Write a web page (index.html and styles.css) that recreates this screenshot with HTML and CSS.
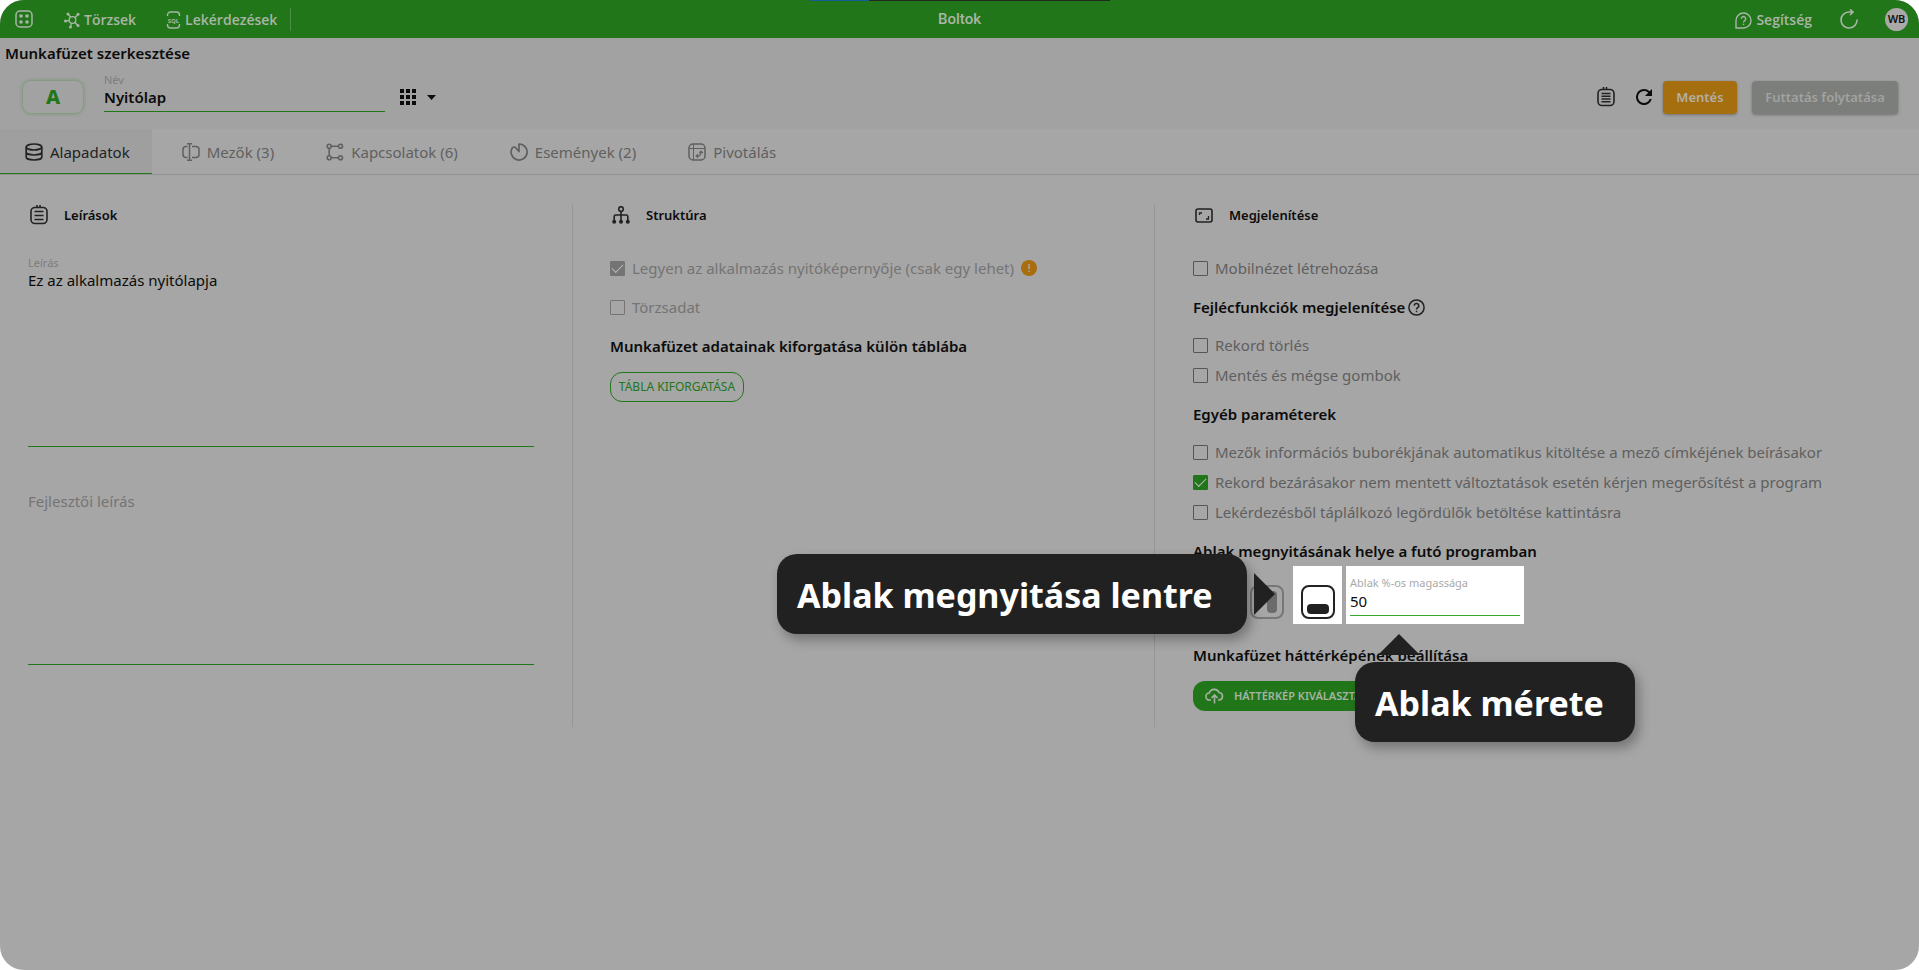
FILE: index.html
```html
<!DOCTYPE html>
<html lang="hu">
<head>
<meta charset="utf-8">
<title>Munkafüzet szerkesztése</title>
<link rel="stylesheet" href="styles.css">
</head>
<body>
<div class="app">
  <div class="progress"><span class="progress-done"></span><span class="progress-rest"></span></div>
  <header class="topbar">
    <nav class="topnav">
      <button class="top-button" aria-label="Alkalmazások">
        <svg width="18" height="18" viewBox="0 0 18 18" fill="none" stroke="currentColor" stroke-width="1.5"><rect x="1" y="1" width="16" height="16" rx="4"/><g fill="currentColor" stroke="none"><circle cx="6" cy="6" r="1.8"/><circle cx="12" cy="6" r="1.8"/><circle cx="6" cy="12" r="1.8"/><circle cx="12" cy="12" r="1.8"/></g></svg>
      </button>
      <a class="top-link top-link-first" href="#torzsek">
        <svg width="16" height="18" viewBox="0 0 16 18" fill="none" stroke="currentColor" stroke-width="1.3"><circle cx="8.500" cy="9" r="3.300"/><path d="M6.500 6.200 4.500 3.500M11 6.800l2.700-3M11 11.500l2.300 2.500M7.500 12.200 6.500 15.500M5.200 9.500 1.500 10"/><g fill="currentColor" stroke="none"><circle cx="4" cy="3" r="1.500"/><circle cx="14" cy="3.200" r="1.500"/><circle cx="14" cy="14.500" r="1.500"/><circle cx="6.500" cy="16" r="1.500"/><circle cx="1.500" cy="10" r="1.500"/></g></svg>
        Törzsek</a>
      <a class="top-link" href="#lekerdezesek">
        <svg width="15" height="18" viewBox="0 0 15 18" fill="none" stroke="currentColor" stroke-width="1.400"><path d="M1.500 5V4a3 3 0 0 1 3-3h6a3 3 0 0 1 3 3v1M1.500 13v1a3 3 0 0 0 3 3h6a3 3 0 0 0 3-3v-1"/><text class="sql" x="7.500" y="11.500" text-anchor="middle">SQL</text></svg>
        Lekérdezések</a>
      <span class="top-divider"></span>
    </nav>
    <div class="app-name">Boltok</div>
    <div class="topside">
      <a class="top-link top-link-help" href="#segitseg">
        <svg width="17" height="17" viewBox="0 0 17 17" fill="none" stroke="currentColor" stroke-width="1.400"><path d="M1 16V8.500A7.500 7.500 0 1 1 8.500 16Z"/><path d="M6.300 6.700a2.200 2.200 0 1 1 3.400 1.900c-.9.600-1.200.9-1.200 1.900M8.500 11.700v1.300"/></svg>
        Segítség</a>
      <button class="top-button" aria-label="Frissítés">
        <svg width="18" height="20" viewBox="0 0 18 20" fill="none" stroke="currentColor" stroke-width="1.600"><path d="M17 10.500a8 8 0 1 1-8-7.500h4M10 .500 13 3l-3 3"/></svg>
      </button>
      <button class="avatar">WB</button>
    </div>
  </header>

  <section class="head">
    <h1 class="title">Munkafüzet szerkesztése</h1>
    <div class="toolbar">
      <button class="letter">A</button>
      <div class="name-field">
        <label class="label" for="name">Név</label>
        <input class="name-input" id="name" value="Nyitólap">
      </div>
      <button class="icon-button" aria-label="Ikon választása">
        <svg width="37" height="16" viewBox="0 0 37 16" fill="currentColor"><path d="M0 0h4v4H0zM6 0h4v4H6zM12 0h4v4h-4zM0 6h4v4H0zM6 6h4v4H6zM12 6h4v4h-4zM0 12h4v4H0zM6 12h4v4H6zM12 12h4v4h-4zM27 6h9l-4.500 5z"/></svg>
      </button>
      <div class="actions">
        <button class="icon-button" aria-label="Jegyzet">
          <svg width="18" height="20" viewBox="0 0 18 20" fill="none" stroke="#222" stroke-width="1.600"><rect x="1" y="2.500" width="16" height="16" rx="4"/><path d="M6.500 3V0M9.500 3V0M4.500 6.500h9M4.500 9.200h9M4.500 12h9M4.500 14.700h9"/></svg>
        </button>
        <button class="icon-button icon-reload" aria-label="Újratöltés">
          <svg width="16" height="16" viewBox="4 4 16 16" fill="currentColor"><path d="M17.650 6.350A7.960 7.960 0 0 0 12 4a8 8 0 1 0 7.730 10h-2.080A6 6 0 1 1 12 6c1.660 0 3.140.690 4.220 1.780L13 11h7V4z"/></svg>
        </button>
        <button class="btn btn-save">Mentés</button>
        <button class="btn btn-run" disabled>Futtatás folytatása</button>
      </div>
    </div>
  </section>

  <nav class="tabs">
    <button class="tab tab-active">
      <svg width="18" height="18" viewBox="0 0 18 18" fill="none" stroke="currentColor" stroke-width="1.700"><ellipse cx="9" cy="4" rx="7.800" ry="3"/><path d="M1.200 4v10c0 1.700 3.500 3 7.800 3s7.800-1.300 7.800-3V4M1.200 9c0 1.700 3.500 3 7.800 3s7.800-1.300 7.800-3"/></svg>
      Alapadatok</button>
    <button class="tab">
      <svg width="18" height="18" viewBox="0 0 18 18" fill="none" stroke="currentColor" stroke-width="1.500"><path d="M5.500 3.500H4a3 3 0 0 0-3 3v5a3 3 0 0 0 3 3h1.500M10 3.500h4a3 3 0 0 1 3 3v5a3 3 0 0 1-3 3h-4M5 .800h5M5 17.200h5M7.500 1v16"/></svg>
      Mezők (3)</button>
    <button class="tab">
      <svg width="18" height="18" viewBox="0 0 18 18" fill="none" stroke="currentColor" stroke-width="1.600"><circle cx="3.200" cy="3.200" r="2"/><circle cx="14.500" cy="3.200" r="2"/><circle cx="3.200" cy="14.800" r="2"/><circle cx="14.500" cy="14.800" r="2"/><path d="M5.200 3.200h7.300M3.200 5.200v7.600M5.200 14.800h7.300"/></svg>
      Kapcsolatok (6)</button>
    <button class="tab">
      <svg width="18" height="18" viewBox="0 0 18 18" fill="none" stroke="currentColor" stroke-width="1.700"><path d="M9 1a8 8 0 1 1-6.500 3.500L5 4l4 4.500Z" stroke-linejoin="round"/></svg>
      Események (2)</button>
    <button class="tab">
      <svg width="18" height="18" viewBox="0 0 18 18" fill="none" stroke="currentColor" stroke-width="1.500"><rect x="1" y="1" width="16" height="16" rx="4"/><path d="M5.500 1v16M1 5.500h16" stroke-width="1"/><path d="M8.500 13c3 .500 4.500-1 4.500-4M11.200 10.200 13 8.200l1.800 2M10 11.200 8.200 13l2 1.800" stroke-width="1.200"/></svg>
      Pivotálás</button>
  </nav>

  <main class="columns">
    <section class="column">
      <h2 class="section-title">
        <svg width="18" height="20" viewBox="0 0 18 20" fill="none" stroke="#222" stroke-width="1.600"><rect x="1" y="2.500" width="16" height="16" rx="4"/><path d="M7 3V0M10 3V0M4.500 6.500h9M4.500 10.500h9M4.500 14.500h9"/></svg>
        Leírások</h2>
      <label class="label" for="desc">Leírás</label>
      <textarea class="area" id="desc">Ez az alkalmazás nyitólapja</textarea>
      <textarea class="area area-dev" aria-label="Fejlesztői leírás" placeholder="Fejlesztői leírás"></textarea>
    </section>

    <section class="column">
      <h2 class="section-title">
        <svg width="18" height="18" viewBox="0 0 18 18" fill="none" stroke="#222" stroke-width="1.600"><circle cx="9" cy="3" r="2.300"/><path d="M9 5.300V15M2.200 15v-4.500q0-1.500 1.500-1.500h10.600q1.500 0 1.500 1.500V15"/><g fill="#222" stroke="none"><circle cx="2.200" cy="15.800" r="2"/><circle cx="9" cy="15.800" r="2"/><circle cx="15.800" cy="15.800" r="2"/></g></svg>
        Struktúra</h2>
      <label class="check check-off"><input type="checkbox" checked disabled>Legyen az alkalmazás nyitóképernyője (csak egy lehet)
        <svg width="16" height="16" viewBox="0 0 16 16"><circle cx="8" cy="8" r="8" fill="#a86e0d"/><path d="M8 4v5M8 10.500V12" stroke="#a6a6a6" stroke-width="1.500"/></svg>
      </label>
      <label class="check check-off check-spaced"><input type="checkbox" disabled>Törzsadat</label>
      <h3 class="group">Munkafüzet adatainak kiforgatása külön táblába</h3>
      <button class="pill pill-outline">TÁBLA KIFORGATÁSA</button>
    </section>

    <section class="column">
      <h2 class="section-title">
        <svg width="18" height="18" viewBox="0 0 18 18" fill="none" stroke="#222" stroke-width="1.600"><rect x="1" y="3" width="16" height="13" rx="2"/><path d="M4.500 9V7H7M13.500 10v3H11" stroke-width="1.300"/></svg>
        Megjelenítése</h2>
      <label class="check"><input type="checkbox">Mobilnézet létrehozása</label>
      <h3 class="group">Fejlécfunkciók megjelenítése
        <svg width="17" height="17" viewBox="0 0 17 17" fill="none" stroke="#222" stroke-width="1.500"><circle cx="8.500" cy="8.500" r="7.600"/><path d="M6.200 6.800a2.300 2.300 0 1 1 3.500 1.900c-.9.600-1.200.9-1.200 1.800M8.500 11.700v1.500"/></svg></h3>
      <label class="check"><input type="checkbox">Rekord törlés</label>
      <label class="check"><input type="checkbox">Mentés és mégse gombok</label>
      <h3 class="group">Egyéb paraméterek</h3>
      <label class="check"><input type="checkbox">Mezők információs buborékjának automatikus kitöltése a mező címkéjének beírásakor</label>
      <label class="check"><input type="checkbox" checked>Rekord bezárásakor nem mentett változtatások esetén kérjen megerősítést a program</label>
      <label class="check"><input type="checkbox">Lekérdezésből táplálkozó legördülők betöltése kattintásra</label>
      <h3 class="group group-tight">Ablak megnyitásának helye a futó programban</h3>
      <div class="picker">
        <button class="place" aria-label="Ablak megnyitása jobbra">
          <svg width="34" height="34" viewBox="0 0 34 34" fill="none" stroke="#777" stroke-width="2"><rect x="1" y="1" width="32" height="32" rx="7"/><rect x="17" y="6" width="10" height="22" rx="4" fill="#6b6b6b" stroke="none"/></svg>
        </button>
        <button class="place place-lit" aria-label="Ablak megnyitása lentre">
          <svg width="34" height="34" viewBox="0 0 34 34" fill="none" stroke="#222" stroke-width="2"><rect x="1" y="1" width="32" height="32" rx="7"/><rect x="6" y="19" width="22" height="10" rx="4" fill="#212121" stroke="none"/></svg>
        </button>
        <div class="size-field">
          <label class="label" for="size">Ablak %-os magassága</label>
          <input class="size-input" id="size" value="50">
        </div>
        <div class="callout callout-place">Ablak megnyitása lentre</div>
        <div class="callout callout-size">Ablak mérete</div>
      </div>
      <h3 class="group">Munkafüzet háttérképének beállítása</h3>
      <button class="pill pill-solid">
        <svg width="19" height="16" viewBox="0 0 19 16" fill="none" stroke="currentColor" stroke-width="1.600"><path d="M6 12H4.500A3.500 3.500 0 0 1 4.300 5 5.200 5.200 0 0 1 14 4.500 3.800 3.800 0 0 1 14.500 12H13M9.500 15.500V7.500M6.500 10l3-3 3 3"/></svg>
        HÁTTÉRKÉP KIVÁLASZTÁSA</button>
    </section>
  </main>
</div>
</body>
</html>
```
FILE: styles.css
```css
* {
  box-sizing: border-box;
}

body {
  margin: 0;
  background: #fff;
  color: #0c0c0c;
  font-family: "Noto Sans", sans-serif;
  font-size: 15px;
  line-height: 20px;
}

button,
input,
textarea {
  margin: 0;
  padding: 0;
  border: 0;
  outline: 0;
  background: none;
  color: inherit;
  font: inherit;
}

svg {
  display: block;
  flex: none;
}

.app {
  position: relative;
  min-height: 100vh;
  overflow: hidden;
  border-radius: 24px;
  background: #a6a6a6;
}

.progress {
  position: absolute;
  top: 0;
  left: 809px;
  display: flex;
  height: 1px;
}

.progress-done {
  width: 60px;
  background: #155d99;
}

.progress-rest {
  width: 241px;
  background: #202a20;
}

/* Top bar */

.topbar {
  display: grid;
  grid-template-columns: 1fr auto 1fr;
  align-items: center;
  height: 38px;
  padding: 0 11px;
  background: #22761a;
  color: #a9b5a7;
}

.topnav,
.topside {
  display: flex;
  align-items: center;
}

.topnav {
  padding-left: 4px;
}

.topside {
  justify-content: flex-end;
}

.top-link {
  display: flex;
  align-items: center;
  gap: 4px;
  margin-right: 30px;
  padding-top: 2px;
  color: inherit;
  font-family: "Open Sans", sans-serif;
  font-size: 14px;
  font-weight: 600;
  text-decoration: none;
}

.top-link-first {
  margin-left: 31px;
}

.top-link-help {
  margin-right: 28px;
}

.topnav .top-link + .top-divider {
  margin-left: -17px;
}

.top-divider {
  width: 1px;
  height: 23px;
  background: #4d8e46;
}

.sql {
  fill: currentColor;
  stroke: none;
  font: 700 6px "Open Sans", sans-serif;
}

.app-name {
  font-family: Roboto, sans-serif;
  font-weight: 500;
}

.avatar {
  width: 23px;
  height: 23px;
  margin-left: 27px;
  border-radius: 50%;
  background: #a9a9a9;
  color: #111;
  font-size: 11px;
  font-weight: 600;
}

/* Page head */

.head {
  height: 91px;
  padding: 5px 21px 0 5px;
  background: #a2a2a2;
}

.title {
  margin: 0;
  font-size: 15px;
  font-weight: 600;
}

.toolbar {
  display: flex;
  align-items: center;
  height: 48px;
  margin-top: 10px;
  padding-left: 18px;
}

.letter {
  width: 60px;
  height: 32px;
  border-radius: 8px;
  box-shadow: 0 0 4px #5f935b;
  color: #22761a;
  font-size: 20px;
  font-weight: 800;
}

.name-field {
  width: 281px;
  margin: 0 15px 10px 21px;
}

.label {
  display: block;
  color: #7c7c7c;
  font-size: 11px;
  line-height: 14px;
}

.name-input {
  width: 100%;
  height: 25px;
  padding-bottom: 3px;
  border-bottom: 1px solid #22761a;
  font-weight: 600;
}

.actions {
  display: flex;
  align-items: center;
  margin-left: auto;
}

.icon-reload {
  margin: 0 11px 0 21px;
}

.btn {
  height: 33px;
  border-radius: 4px;
  box-shadow: 0 1px 3px #707070;
  color: #b3afa5;
  font-size: 13px;
  font-weight: 600;
}

.btn-save {
  width: 74px;
  margin-right: 15px;
  background: #a56e0e;
}

.btn-run {
  width: 146px;
  background: #7b7e7a;
  color: #a2a2a2;
}

/* Tabs */

.tabs {
  display: flex;
  gap: 5px;
  height: 46px;
  border-bottom: 1px solid #919191;
}

.tab {
  display: flex;
  align-items: center;
  gap: 7px;
  padding: 1px 22px 0 25px;
  color: #606060;
}

.tab-active {
  border-bottom: 1px solid #22761a;
  background: #9f9f9f;
  color: #222;
}

/* Columns */

.columns {
  display: grid;
  grid-template-columns: 545fr 582fr 764fr;
  margin: 29px 0 0 28px;
}

.column {
  min-height: 523px;
  padding-left: 37px;
  border-right: 1px solid #969696;
}

.column:first-child {
  padding: 0 38px 0 0;
}

.column:last-child {
  padding-left: 38px;
  border-right: 0;
}

.section-title {
  display: flex;
  align-items: center;
  gap: 16px;
  height: 22px;
  margin: 0 0 30px;
  padding-left: 2px;
  font-size: 13px;
  font-weight: 600;
}

.area {
  display: block;
  width: 100%;
  height: 177px;
  border-bottom: 1px solid #22761a;
  resize: none;
}

.area-dev {
  height: 174px;
  margin-top: 44px;
}

.area::placeholder {
  color: #747474;
}

.check {
  display: flex;
  align-items: center;
  gap: 7px;
  height: 24px;
  color: #5f5f5f;
  white-space: nowrap;
}

.check + .check {
  margin-top: 6px;
}

.check + .check-spaced {
  margin-top: 15px;
}

.check-off {
  color: #747474;
}

.check input {
  display: grid;
  flex: none;
  place-items: center;
  width: 15px;
  height: 15px;
  border: 1px solid #555;
  border-radius: 1px;
  appearance: none;
}

.check-off input {
  border-color: #747474;
}

.check input:checked {
  border-color: #22761a;
  background: #22761a;
}

.check-off input:checked {
  border-color: #747474;
  background: #747474;
}

.check input:checked::before {
  width: 10px;
  height: 5px;
  margin-bottom: 3px;
  border: solid #b5b5b5;
  border-width: 0 0 1px 1px;
  content: "";
  transform: rotate(-45deg);
}

.group {
  display: flex;
  align-items: center;
  gap: 3px;
  height: 24px;
  margin: 15px 0 14px;
  font-size: 15px;
  font-weight: 600;
  white-space: nowrap;
}

.group-tight {
  margin-bottom: 3px;
}

.pill {
  display: flex;
  align-items: center;
  justify-content: center;
  gap: 10px;
  height: 30px;
  border-radius: 12px;
}

.pill-outline {
  width: 134px;
  border: 1px solid #22761a;
  color: #22761a;
  font-size: 12px;
}

.pill-solid {
  padding: 0 12px;
  background: #22761a;
  color: #a6b3a4;
  font-size: 11px;
  font-weight: 600;
}

/* Window placement */

.picker {
  position: relative;
  display: flex;
  height: 58px;
  margin-bottom: 19px;
  padding-left: 48px;
}

.place {
  display: flex;
  justify-content: center;
  width: 52px;
  padding-top: 19px;
}

.place-lit {
  width: 49px;
  margin-right: 4px;
  background: #fff;
}

.size-field {
  width: 178px;
  padding: 10px 4px 0;
  background: #fff;
}

.size-field .label {
  color: #a9a9a9;
}

.size-input {
  width: 100%;
  height: 26px;
  padding-bottom: 4px;
  border-bottom: 1px solid #34a82a;
}

.callout {
  position: absolute;
  height: 80px;
  padding-left: 20px;
  border-radius: 20px;
  background: #212121;
  box-shadow: 4px 6px 12px rgba(0, 0, 0, .3);
  color: #fff;
  font-size: 34px;
  font-weight: 700;
  line-height: 82px;
  white-space: nowrap;
}

.callout::after {
  position: absolute;
  border: 21px solid transparent;
  content: "";
}

.callout-place {
  top: -12px;
  left: -416px;
  width: 470px;
}

.callout-place::after {
  top: 19px;
  left: 477px;
  border-right-width: 0;
  border-left-color: #212121;
}

.callout-size {
  top: 96px;
  left: 162px;
  width: 280px;
}

.callout-size::after {
  top: -28px;
  left: 23px;
  border-top-width: 0;
  border-bottom-color: #212121;
}
```
